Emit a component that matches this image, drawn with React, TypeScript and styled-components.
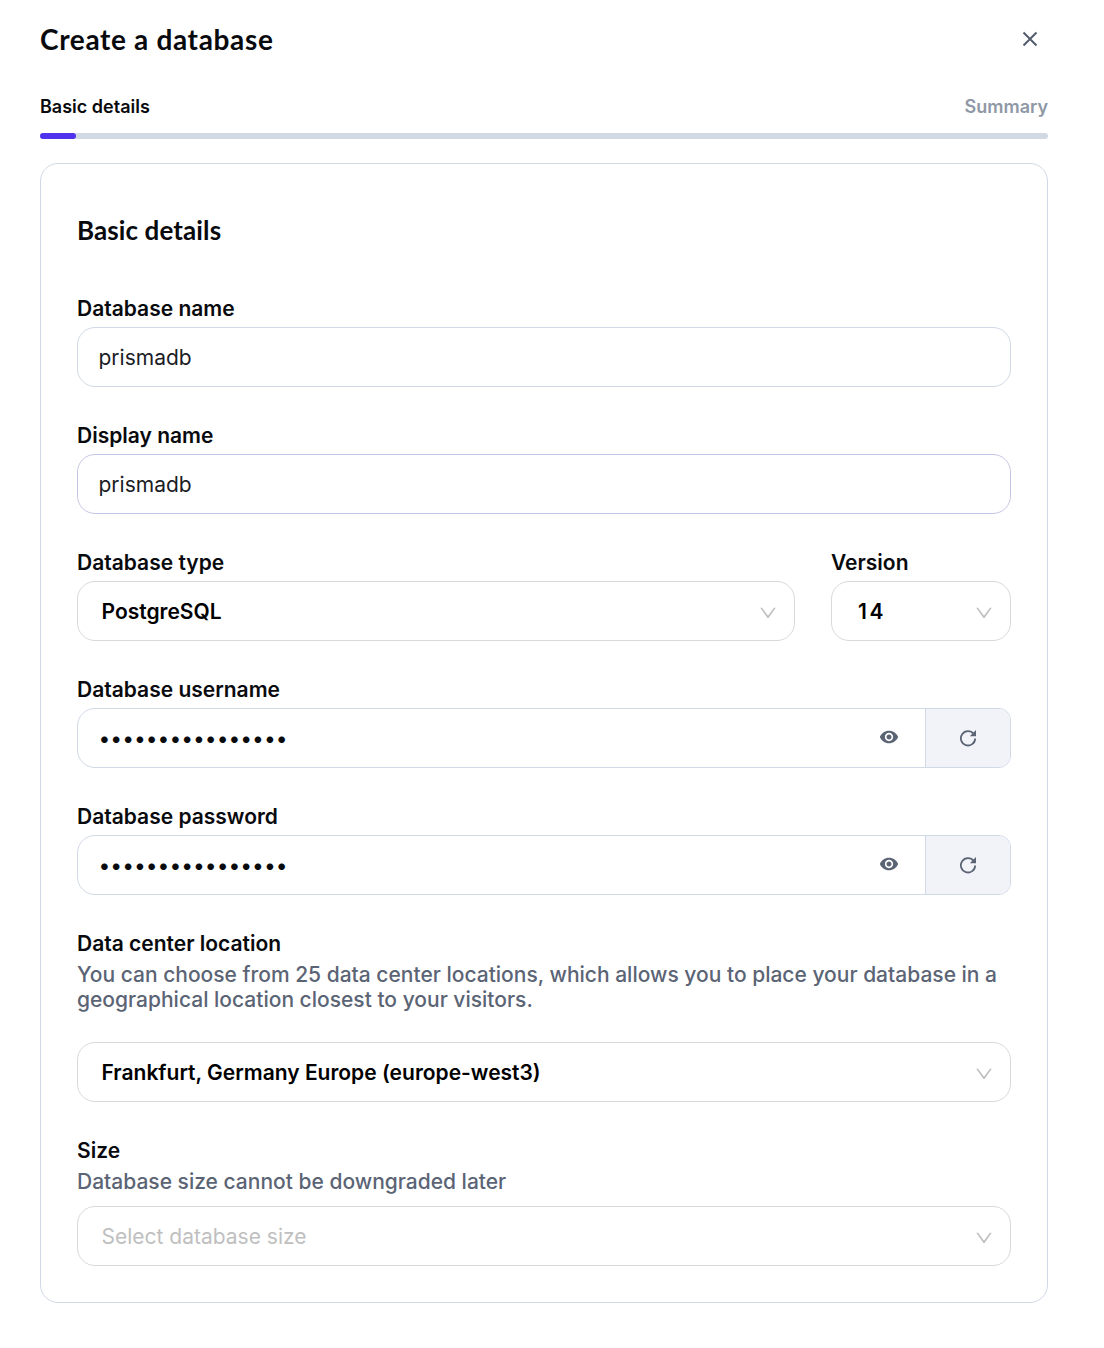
import React, { useState } from "react";
import styled, { createGlobalStyle, css } from "styled-components";

const GlobalStyle = createGlobalStyle`
  * { box-sizing: border-box; }
  body {
    margin: 0;
    background: #fff;
    color: #090a15;
    font-family: Inter, "Liberation Sans", sans-serif;
  }
`;

const Dialog = styled.main`
  display: flex;
  flex-direction: column;
  width: 1104px;
  min-height: 1348px;
  padding: 15px 56px 45px 40px;
  background: #fff;
`;

const Header = styled.header`
  display: flex;
  align-items: center;
  justify-content: space-between;
  height: 48px;
`;

const Title = styled.h1`
  margin: 0;
  font: 700 28px/42px Lato, "Liberation Sans", sans-serif;
  letter-spacing: 0.65px;
  color: #090a0e;
`;

const CloseButton = styled.button`
  display: flex;
  width: 36px;
  height: 36px;
  padding: 0;
  align-items: center;
  justify-content: center;
  border: 0;
  background: none;
  color: #535d6e;
`;

const Steps = styled.div`
  display: flex;
  justify-content: space-between;
  margin-top: 30px;
  height: 27px;
  line-height: 27px;
`;

const Step = styled.span<{ $active?: boolean }>`
  font-size: 18px;
  font-weight: 600;
  color: ${(p) => (p.$active ? "#090a0e" : "#8f98a6")};
`;

const Track = styled.div`
  height: 6px;
  margin-top: 13px;
  border-radius: 3px;
  background: #d0d9e4;
`;

const Progress = styled.div`
  width: 36px;
  height: 6px;
  border-radius: 3px;
  background: #4f33ec;
`;

const Card = styled.section`
  display: flex;
  flex-direction: column;
  margin-top: 24px;
  height: 1140px;
  padding: 45px 36px 0;
  border: 1px solid #d0d9e6;
  border-radius: 18px;
`;

const CardTitle = styled.h2`
  margin: 0 0 44px;
  font: 700 26px/42px Lato, "Liberation Sans", sans-serif;
  letter-spacing: 0.1px;
  color: #090a0e;
`;

const Form = styled.form`
  display: flex;
  flex-direction: column;
  gap: 35px;
`;

const Row = styled.div`
  display: flex;
  gap: 36px;
`;

const FieldBox = styled.div<{ $width?: number }>`
  display: flex;
  flex-direction: column;
  width: ${(p) => (p.$width ? `${p.$width}px` : "100%")};
`;

const Label = styled.div`
  height: 32px;
  font-size: 21px;
  font-weight: 600;
  line-height: 28px;
  color: #090a0e;
`;

const Hint = styled.p<{ $gap: number }>`
  margin: 0 0 ${(p) => p.$gap}px;
  font-size: 21px;
  font-weight: 500;
  line-height: 25px;
  color: #5b6475;
`;

const boxStyle = css`
  display: flex;
  align-items: center;
  width: 100%;
  height: 60px;
  border-radius: 18px;
  background: #fff;
`;

const TextInput = styled.input<{ $focused?: boolean }>`
  ${boxStyle}
  padding: 0 20.5px;
  border: 1px solid ${(p) => (p.$focused ? "#c5c6e4" : "#d0d9e6")};
  outline: 0;
  color: #1b1c25;
  font: 400 21px Inter, "Liberation Sans", sans-serif;
`;

const SelectBox = styled.div<{ $placeholder?: boolean; $numeric?: boolean }>`
  ${boxStyle}
  justify-content: space-between;
  padding: 0 17px 0 ${(p) => (p.$numeric ? 26 : 23.5)}px;
  border: 1px solid #d9d9d9;
  font-size: 21px;
  font-weight: ${(p) => (p.$placeholder ? 400 : 600)};
  letter-spacing: ${(p) => (p.$numeric ? "2.5px" : "0")};
  color: ${(p) => (p.$placeholder ? "#bfbfbf" : "#000")};

  svg {
    margin-top: 3px;
  }
`;

const SecretBox = styled.div`
  ${boxStyle}
  border: 1px solid #d0d9e6;
  border-radius: 18px 12px 12px 18px;
  overflow: hidden;
`;

const SecretInput = styled.input`
  flex: 1;
  min-width: 0;
  height: 58px;
  padding: 0 0 0 20.5px;
  border: 0;
  outline: 0;
  background: none;
  color: #090a0e;
  font: 400 21px Inter, "Liberation Sans", sans-serif;
`;

const IconButton = styled.button<{ $filled?: boolean }>`
  display: flex;
  flex: none;
  width: ${(p) => (p.$filled ? 85 : 72)}px;
  height: 58px;
  padding: 0 0 ${(p) => (p.$filled ? 0 : 2)}px;
  align-items: center;
  justify-content: center;
  border: 0;
  border-left: ${(p) => (p.$filled ? "1px solid #d0d9e6" : "0")};
  background: ${(p) => (p.$filled ? "#f2f3f9" : "none")};
  color: #5b6475;
`;

const CloseIcon = () => (
  <svg width="16" height="16" viewBox="0 0 16 16" fill="none" stroke="currentColor" strokeWidth="2">
    <path d="M1.500 1.500l13 13M14.500 1.500l-13 13" />
  </svg>
);

const ChevronIcon = () => (
  <svg width="18" height="18" viewBox="64 64 896 896" fill="#bfbfbf">
    <path d="M884 256h-75c-5.100 0-9.900 2.500-12.900 6.600L512 654.200 227.900 262.600c-3-4.100-7.800-6.600-12.900-6.600h-75c-6.500 0-10.300 7.400-6.500 12.700l352.600 486.100c12.800 17.600 39 17.600 51.700 0l352.600-486.100c3.900-5.300.1-12.700-6.400-12.700z" />
  </svg>
);

const EyeIcon = () => (
  <svg width="20" height="20" viewBox="0 0 24 24" fill="currentColor">
    <path d="M12 4.500C7 4.500 2.730 7.610 1 12c1.730 4.390 6 7.500 11 7.500s9.270-3.110 11-7.500c-1.730-4.390-6-7.500-11-7.500zM12 17c-2.760 0-5-2.240-5-5s2.240-5 5-5 5 2.240 5 5-2.240 5-5 5zm0-8c-1.660 0-3 1.340-3 3s1.340 3 3 3 3-1.340 3-3-1.340-3-3-3z" />
  </svg>
);

const RefreshIcon = () => (
  <svg width="18" height="18" viewBox="0 0 18 18" fill="none">
    <path d="M14.700 5A7.150 7.150 0 1 0 16.150 9.400" stroke="currentColor" strokeWidth="1.800" />
    <path d="M17 1v6.200h-6.200z" fill="currentColor" />
  </svg>
);

type FieldProps = { label: string; width?: number; children: React.ReactNode };

const Field = ({ label, width, children }: FieldProps) => (
  <FieldBox $width={width}>
    <Label>{label}</Label>
    {children}
  </FieldBox>
);

const Secret = ({ name }: { name: string }) => {
  const [visible, setVisible] = useState(false);
  return (
    <SecretBox>
      <SecretInput aria-label={name} type={visible ? "text" : "password"} defaultValue="a8f3k29dm4x7q1zp" />
      <IconButton type="button" aria-label="Toggle visibility" onClick={() => setVisible(!visible)}>
        <EyeIcon />
      </IconButton>
      <IconButton type="button" aria-label="Regenerate" $filled>
        <RefreshIcon />
      </IconButton>
    </SecretBox>
  );
};

export default function App() {
  return (
    <>
      <GlobalStyle />
      <Dialog>
        <Header>
          <Title>Create a database</Title>
          <CloseButton aria-label="Close">
            <CloseIcon />
          </CloseButton>
        </Header>
        <Steps>
          <Step $active>Basic details</Step>
          <Step>Summary</Step>
        </Steps>
        <Track>
          <Progress />
        </Track>
        <Card>
          <CardTitle>Basic details</CardTitle>
          <Form>
            <Field label="Database name">
              <TextInput defaultValue="prismadb" />
            </Field>
            <Field label="Display name">
              <TextInput defaultValue="prismadb" $focused />
            </Field>
            <Row>
              <Field label="Database type" width={718}>
                <SelectBox>PostgreSQL<ChevronIcon /></SelectBox>
              </Field>
              <Field label="Version" width={180}>
                <SelectBox $numeric>14<ChevronIcon /></SelectBox>
              </Field>
            </Row>
            <Field label="Database username">
              <Secret name="Database username" />
            </Field>
            <Field label="Database password">
              <Secret name="Database password" />
            </Field>
            <Field label="Data center location">
              <Hint $gap={30}>
                You can choose from 25 data center locations, which allows you to place your database in a
                geographical location closest to your visitors.
              </Hint>
              <SelectBox>Frankfurt, Germany Europe (europe-west3)<ChevronIcon /></SelectBox>
            </Field>
            <Field label="Size">
              <Hint $gap={12}>Database size cannot be downgraded later</Hint>
              <SelectBox $placeholder>Select database size<ChevronIcon /></SelectBox>
            </Field>
          </Form>
        </Card>
      </Dialog>
    </>
  );
}
